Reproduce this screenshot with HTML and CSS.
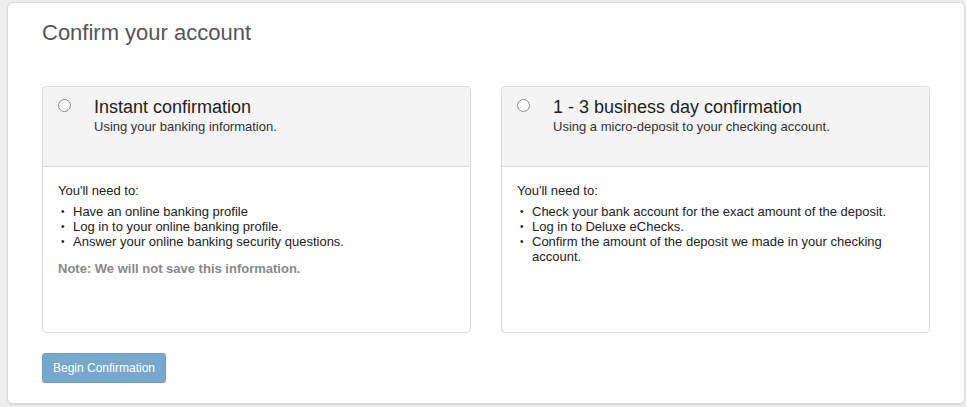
FILE: index.html
```html
<!DOCTYPE html>
<html>
<head>
<meta charset="utf-8">
<link rel="stylesheet" href="styles.css">
</head>
<body>
<div class="card">
  <h1 class="title">Confirm your account</h1>
  <div class="options">
    <div class="panel">
      <div class="panel-head">
        <span class="radio"></span>
        <div class="head-text">
          <div class="opt-title">Instant confirmation</div>
          <div class="opt-sub">Using your banking information.</div>
        </div>
      </div>
      <div class="panel-body">
        <p class="need">You'll need to:</p>
        <ul class="list">
          <li>Have an online banking profile</li>
          <li>Log in to your online banking profile.</li>
          <li>Answer your online banking security questions.</li>
        </ul>
        <p class="note">Note: We will not save this information.</p>
      </div>
    </div>
    <div class="panel">
      <div class="panel-head">
        <span class="radio"></span>
        <div class="head-text">
          <div class="opt-title">1 - 3 business day confirmation</div>
          <div class="opt-sub">Using a micro-deposit to your checking account.</div>
        </div>
      </div>
      <div class="panel-body">
        <p class="need">You'll need to:</p>
        <ul class="list">
          <li>Check your bank account for the exact amount of the deposit.</li>
          <li>Log in to Deluxe eChecks.</li>
          <li>Confirm the amount of the deposit we made in your checking account.</li>
        </ul>
      </div>
    </div>
  </div>
  <button class="btn">Begin Confirmation</button>
</div>
</body>
</html>
```
FILE: styles.css
```css
html, body {
  margin: 0;
  padding: 0;
  background: #eeeeee;
  font-family: "Liberation Sans", Arial, sans-serif;
  color: #333;
}
.card {
  margin: 2px 1px 3px 7px;
  height: 402px;
  box-sizing: border-box;
  background: #fff;
  border: 1px solid #dcdcdc;
  border-radius: 6px;
  box-shadow: 0 1px 2px rgba(0,0,0,0.12);
  padding: 18px 34px 0 34px;
}
.title {
  margin: 0;
  font-size: 22px;
  font-weight: normal;
  color: #555;
  line-height: 24px;
}
.options {
  display: grid;
  grid-template-columns: 429px 429px;
  column-gap: 30px;
  margin-top: 41px;
}
.panel {
  height: 247px;
  box-sizing: border-box;
  border: 1px solid #dadada;
  border-radius: 4px;
  display: flex;
  flex-direction: column;
}
.panel-head {
  height: 80px;
  box-sizing: border-box;
  background: #f4f4f4;
  border-bottom: 1px solid #dadada;
  border-radius: 4px 4px 0 0;
  padding: 10px 15px;
  display: flex;
  gap: 23px;
}
.radio {
  width: 11px;
  height: 11px;
  border: 1px solid #8a8a8a;
  border-radius: 50%;
  background: #fff;
  margin-top: 2px;
  flex: none;
}
.opt-title {
  font-size: 18px;
  line-height: 20px;
  color: #222;
}
.opt-sub {
  font-size: 13px;
  line-height: 16px;
  color: #333;
  margin-top: 2px;
}
.panel-body {
  padding: 16px 15px 15px;
  font-size: 13px;
  line-height: 15px;
  color: #222;
}
.need {
  margin: 0 0 6px 0;
}
.list {
  margin: 0;
  padding: 0;
  list-style: none;
}
.list li {
  position: relative;
  padding-left: 15px;
}
.list li::before {
  content: "\2022";
  position: absolute;
  left: 3px;
  top: 0;
  font-size: 10px;
}
.note {
  margin: 12px 0 0 0;
  font-weight: bold;
  color: #888;
}
.btn {
  margin-top: 20px;
  width: 124px;
  height: 30px;
  background: #77a7cf;
  border: 1px solid #6a9cc6;
  border-radius: 3px;
  color: #fff;
  font-family: "Liberation Sans", Arial, sans-serif;
  font-size: 12px;
  padding: 0;
}
```
